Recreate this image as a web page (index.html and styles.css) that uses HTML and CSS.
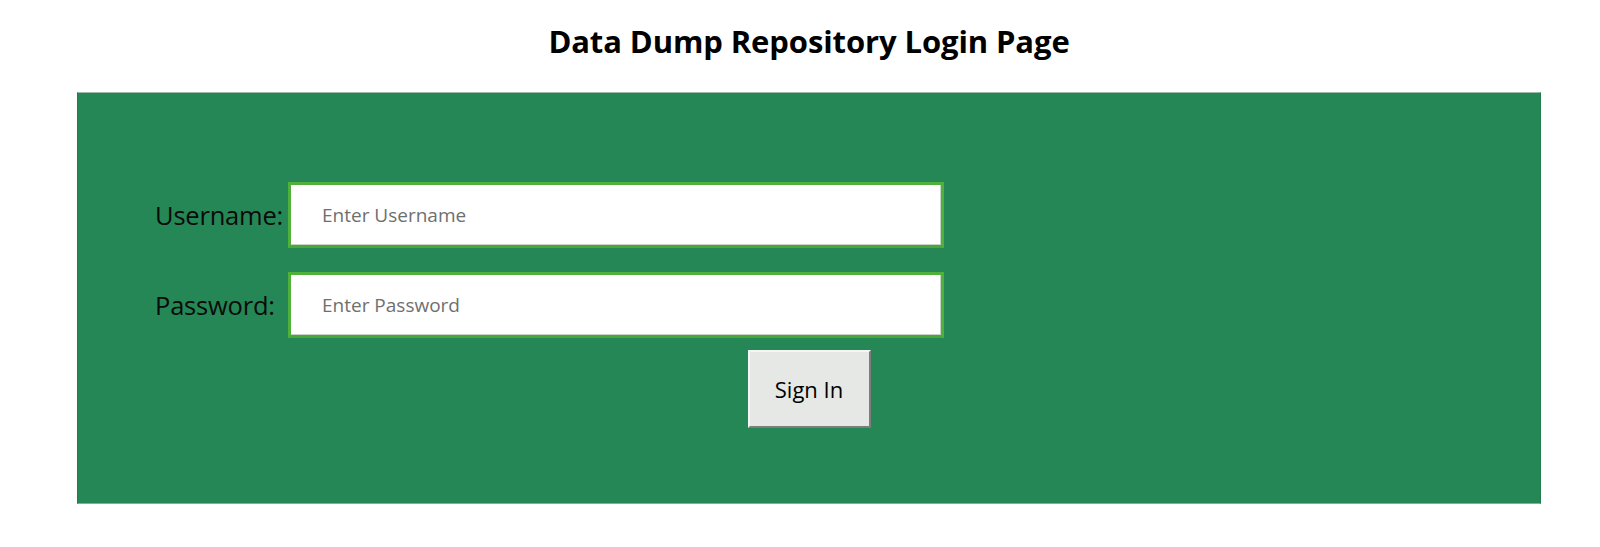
FILE: index.html
```html
<!DOCTYPE html>
<html lang="en">
<head>
<meta charset="utf-8">
<title>Data Dump Repository Login Page</title>
<link rel="stylesheet" href="styles.css">
</head>
<body>
<div class="page">
  <h1 class="title">Data Dump Repository Login Page</h1>
  <form class="panel">
    <div class="fields">
      <label class="label" for="user">Username:</label>
      <input class="field" id="user" type="text" placeholder="Enter Username">
      <label class="label" for="pass">Password:</label>
      <input class="field" id="pass" type="password" placeholder="Enter Password">
    </div>
    <div class="actions">
      <button class="btn" type="button">Sign In</button>
    </div>
  </form>
</div>
</body>
</html>
```

FILE: styles.css
```css
html, body {
  margin: 0;
  padding: 0;
  background: #ffffff;
}

body {
  font-family: "Open Sans", "Noto Sans", "Liberation Sans", sans-serif;
  color: #000;
}

.page {
  width: 1464px;
  margin-left: 77px;
  padding-top: 21px;
}

.title {
  margin: 0 0 31px 0;
  text-align: center;
  font-size: 31px;
  line-height: 40px;
  font-weight: 700;
  letter-spacing: -0.1px;
}

.panel {
  box-sizing: border-box;
  height: 412px;
  background: #258756;
  border: 1px solid #1f7d4c;
  border-top-color: #9fb8a9;
  border-bottom-color: #8fa89a;
  padding: 89px 0 0 77px;
}

.fields {
  display: grid;
  grid-template-columns: 125px 656px;
  column-gap: 8px;
  row-gap: 24px;
  align-items: center;
}

.label {
  font-size: 25.5px;
  color: #0b0b0b;
  white-space: nowrap;
  letter-spacing: -0.2px;
}

.field {
  box-sizing: border-box;
  height: 66px;
  width: 656px;
  margin: 0;
  padding: 0 0 0 31px;
  border: 3px solid #50b13a;
  border-bottom-color: #4aa836;
  background: #fff;
  font-family: inherit;
  font-size: 19px;
  color: #333;
  outline: none;
  box-shadow: inset -1px -1px 0 #c8d2c8;
}

.field::placeholder {
  color: #6f6f6f;
}

.actions {
  display: flex;
  justify-content: center;
  margin-top: 12px;
  margin-left: -77px;
}

.btn {
  box-sizing: border-box;
  width: 123px;
  height: 78px;
  background: #e6e8e6;
  border: 2px solid;
  border-color: #f4f5f4 #7c7e7c #7c7e7c #f4f5f4;
  font-family: inherit;
  font-size: 22px;
  color: #000;
  padding: 0;
  cursor: pointer;
}
```
